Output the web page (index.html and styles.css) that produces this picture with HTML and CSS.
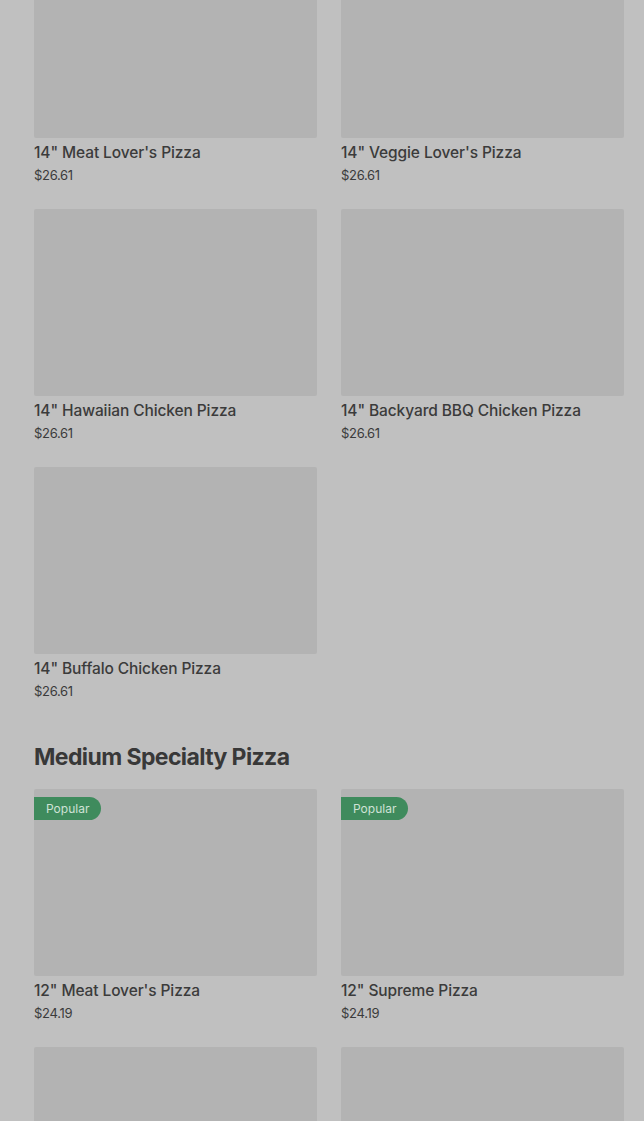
FILE: index.html
```html
<!doctype html>
<html lang="en">
<head>
    <meta charset="UTF-8">
    <title>Menu</title>
    <link rel="stylesheet" href="styles.css">
</head>
<body>
<div class="menu">
    <div class="grid">
        <div class="item">
            <div class="thumb"></div>
            <h4>14" Meat Lover's Pizza</h4>
            <p class="price">$26.61</p>
        </div>
        <div class="item">
            <div class="thumb"></div>
            <h4>14" Veggie Lover's Pizza</h4>
            <p class="price">$26.61</p>
        </div>
        <div class="item">
            <div class="thumb"></div>
            <h4>14" Hawaiian Chicken Pizza</h4>
            <p class="price">$26.61</p>
        </div>
        <div class="item">
            <div class="thumb"></div>
            <h4>14" Backyard BBQ Chicken Pizza</h4>
            <p class="price">$26.61</p>
        </div>
        <div class="item">
            <div class="thumb"></div>
            <h4>14" Buffalo Chicken Pizza</h4>
            <p class="price">$26.61</p>
        </div>
    </div>

    <h2 class="section-title">Medium Specialty Pizza</h2>
    <div class="grid">
        <div class="item">
            <div class="thumb"><span class="badge">Popular</span></div>
            <h4>12" Meat Lover's Pizza</h4>
            <p class="price">$24.19</p>
        </div>
        <div class="item">
            <div class="thumb"><span class="badge">Popular</span></div>
            <h4>12" Supreme Pizza</h4>
            <p class="price">$24.19</p>
        </div>
        <div class="item">
            <div class="thumb"></div>
        </div>
        <div class="item">
            <div class="thumb"></div>
        </div>
    </div>
</div>
</body>
</html>
```

FILE: styles.css
```css
* {
    margin: 0;
    padding: 0;
    box-sizing: border-box;
}

body {
    background: #c0c0c0;
    font-family: Inter, "Liberation Sans", sans-serif;
    color: #3b3b3b;
    overflow: hidden;
}

.menu {
    margin-top: -49px;
    padding: 0 20px 0 34px;
}

.grid {
    display: grid;
    grid-template-columns: 283px 283px;
    column-gap: 24px;
    row-gap: 24px;
}

.thumb {
    position: relative;
    height: 187px;
    background: #b3b3b3;
    border-radius: 2px;
}

.item h4 {
    margin-top: 3px;
    font-size: 15.5px;
    font-weight: 500;
    line-height: 24px;
    letter-spacing: -0.1px;
}

.item .price {
    margin-top: 0;
    font-size: 13px;
    line-height: 20px;
    letter-spacing: -0.3px;
}

.section-title {
    margin: 40px 0 16px;
    font-size: 23px;
    font-weight: 700;
    line-height: 32px;
    letter-spacing: -0.6px;
    color: #383838;
}

.badge {
    position: absolute;
    top: 8px;
    left: 0;
    height: 23px;
    padding: 0 12px;
    line-height: 23px;
    font-size: 12px;
    color: #cfe2d6;
    background: #3f8b5d;
    border-radius: 0 12px 12px 0;
}
```
